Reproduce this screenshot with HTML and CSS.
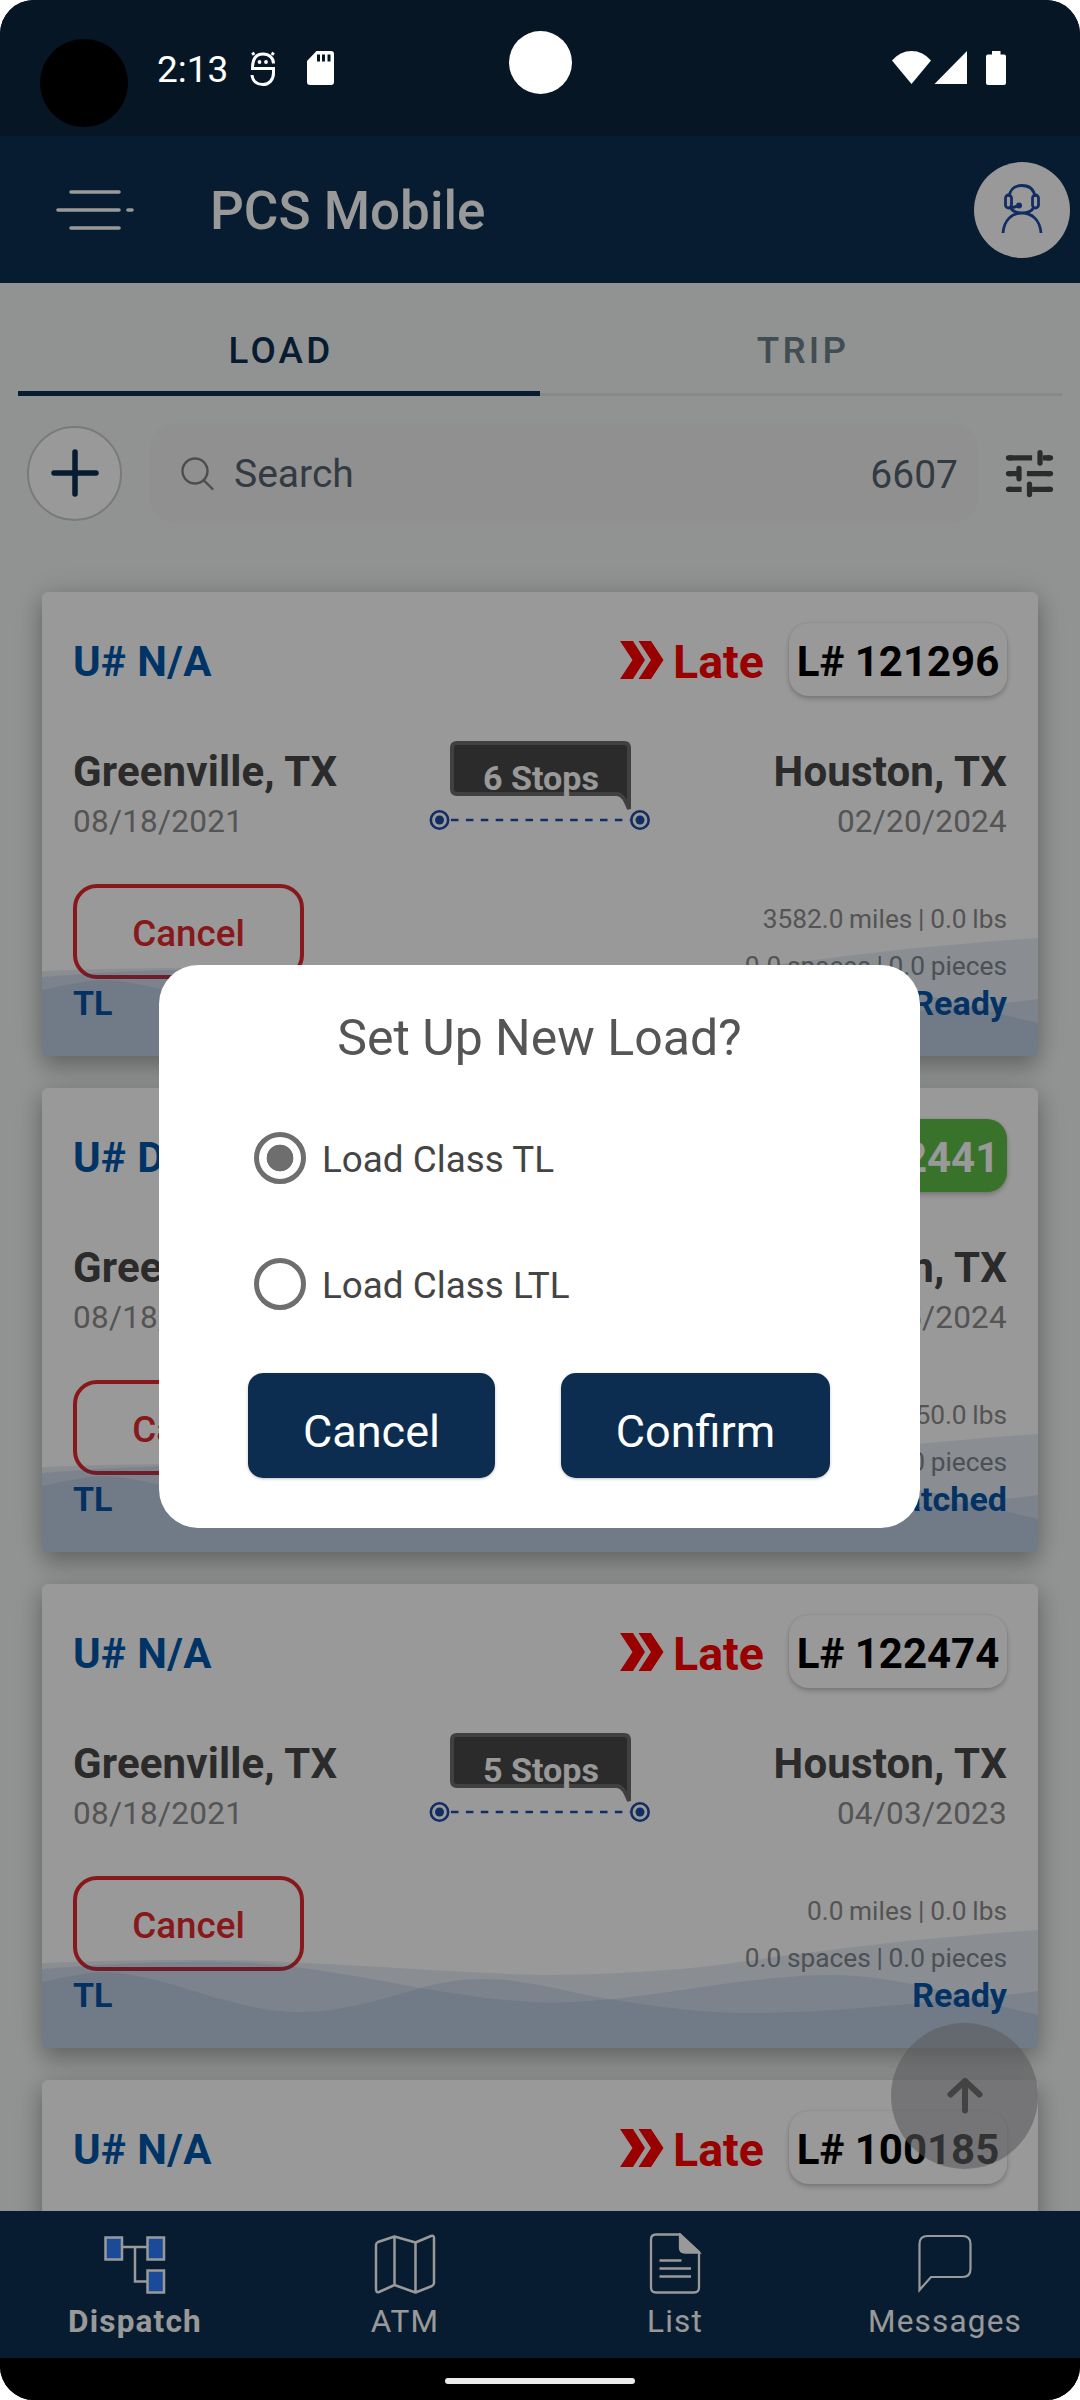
FILE: index.html
```html
<!DOCTYPE html>
<html lang="en">
<head>
  <meta charset="UTF-8">
  <meta name="viewport" content="width=device-width, initial-scale=1.0">
  <title>PCS Mobile</title>
  <link rel="stylesheet" href="styles.css">
</head>
<body>
  <svg class="defs" width="0" height="0">
    <symbol id="waves" viewBox="0 0 996 120" preserveAspectRatio="none">
      <path d="M0 35C50 33 100 32 151 32C250 31 390 44 498 47C560 47 640 43 705 33C790 21 900 8 996 2V120H0Z"/>
      <path d="M0 41C60 36 120 33 182 34C240 34 310 47 378 60C420 67 460 73 498 74.500C525 75 550 73 570 71C620 66 660 58 705 53C740 49 765 47 791 47C860 47 930 72 996 87V120H0Z"/>
      <path d="M0 54C25 49 45 44 65 44C100 46 135 58 165 67C200 77 225 84 258 84C300 84 345 70 378 60C400 54 420 51 440 51C465 51 480 54 498 57C520 61 545 68 570 71.500C615 79 660 85 705 85C750 85 800 82 842 78C895 74 950 69 996 63V120H0Z"/>
    </symbol>
    <symbol id="late" viewBox="0 0 44 38">
      <path d="M0 0H13L25 19L13 38H0L12.500 19Z"/>
      <path d="M18.500 0H31L43.500 19L31 38H18.500L31 19Z"/>
    </symbol>
    <symbol id="route" viewBox="0 0 222 92">
      <path class="bubble" d="M28 2H195Q200 2 200 7V68C197 61 195 54 188 53H28Q23 53 23 48V7Q23 2 28 2Z"/>
      <circle class="ring" cx="10.500" cy="79" r="8.700"/>
      <circle class="dot" cx="10.500" cy="79" r="4.500"/>
      <path class="dash" d="M22 79H201"/>
      <circle class="ring" cx="211" cy="79" r="8.700"/>
      <circle class="dot" cx="211" cy="79" r="4.500"/>
    </symbol>
  </svg>

  <div class="phone">
    <div class="status-bar">
      <div class="touch-dot"></div>
      <span class="clock">2:13</span>
      <svg class="debug-icon" width="26" height="36" viewBox="0 0 26 36">
        <path d="M23.500 12.500C23.500 7 19 3 13 3C7 3 2.500 7 2.500 17.500H23.500V22C23.500 29 19 33.500 13 33.500C7 33.500 2.500 30 2 24M4 4L2.500 1.500M22 4L23.500 1.500" fill="none" stroke="#fff" stroke-width="3"/>
        <circle cx="9.500" cy="11" r="1.900" fill="#fff"/>
        <circle cx="16" cy="11" r="1.900" fill="#fff"/>
      </svg>
      <svg class="sd-icon" width="27" height="34" viewBox="0 0 27 34">
        <path fill="#fff" fill-rule="evenodd" d="M9.500 0H24Q27 0 27 3V31Q27 34 24 34H3Q0 34 0 31V10ZM10 3.500V10.500H13V3.500ZM15 3.500V10.500H18V3.500ZM20.500 3.500V10.500H23.500V3.500Z"/>
      </svg>
      <div class="camera"></div>
      <svg class="system-icons" width="116" height="36" viewBox="0 0 116 36" fill="#fff">
        <path d="M0 9.500Q8 0 19.500 0T39 9.500L19.500 33Z"/>
        <path d="M42.500 33L75 0V33Z"/>
        <path d="M100 0H108.500V3.500H112Q114 3.500 114 5.500V32Q114 34 112 34H96Q94 34 94 32V5.500Q94 3.500 96 3.500H100Z"/>
      </svg>
    </div>

    <div class="app">
      <header class="header">
        <svg class="menu-icon" width="80" height="42" viewBox="0 0 80 42" fill="none" stroke="#fff" stroke-width="3.600" stroke-linecap="round">
          <path d="M15 3H63M2 21H63M72 21H76M15 39H63"/>
        </svg>
        <h1>PCS Mobile</h1>
        <div class="avatar">
          <svg width="46" height="54" viewBox="0 0 46 54" fill="none" stroke="#1e4ba7" stroke-width="2.800">
            <path d="M10 14C11 6 16 2.500 23 2.500S35 6 36 14M11 24C13 28 18 30 23 30S33 28 35 24M4 50C5 37 13 30 23 30S41 37 42 50M10 24Q15 25 18 23"/>
            <rect x="6.500" y="12" width="6" height="13" rx="3"/>
            <rect x="33.500" y="12" width="6" height="13" rx="3"/>
            <circle cx="20" cy="22.500" r="3" fill="#1e4ba7" stroke="none"/>
          </svg>
        </div>
      </header>

      <nav class="tabs">
        <span class="tab active">LOAD</span>
        <span class="tab">TRIP</span>
      </nav>

      <div class="toolbar">
        <button class="add-button">
          <svg width="50" height="50" viewBox="0 0 50 50" stroke="#0c2f50" stroke-width="5.500" stroke-linecap="round">
            <path d="M25 4V46M4 25H46"/>
          </svg>
        </button>
        <div class="search">
          <svg width="34" height="34" viewBox="0 0 34 34" fill="none" stroke="#7c8388" stroke-width="2.400" stroke-linecap="round">
            <circle cx="14" cy="14" r="12.500"/>
            <path d="M23 23.500L31.500 32"/>
          </svg>
          <span class="search-text">Search</span>
          <span class="count">6607</span>
        </div>
        <svg class="filter-icon" width="63" height="63" viewBox="0 0 24 24" fill="none" stroke="#484848" stroke-width="2">
          <path d="M4 6H13M17 6H20M4 12H8M11 12H20M4 18H9M13 18H20"/>
          <path stroke-linecap="round" d="M4 6H5M16 4V8M19 6H20M4 12H5M8 10V14M19 12H20M4 18H5M12 16V20M19 18H20"/>
        </svg>
      </div>

      <main class="loads">
        <article class="card">
          <div class="card-top">
            <span class="unit">U# N/A</span>
            <svg class="late-icon" width="44" height="38"><use href="#late"/></svg>
            <span class="late">Late</span>
            <span class="badge">L# 121296</span>
          </div>
          <div class="card-route">
            <div class="place"><b>Greenville, TX</b><span>08/18/2021</span></div>
            <div class="stops">
              <svg width="222" height="92"><use href="#route"/></svg>
              <span>6 Stops</span>
            </div>
            <div class="place end"><b>Houston, TX</b><span>02/20/2024</span></div>
          </div>
          <div class="card-details">
            <button class="cancel-load">Cancel</button>
            <div class="metrics"><span>3582.0 miles | 0.0 lbs</span><span>0.0 spaces | 0.0 pieces</span></div>
          </div>
          <div class="card-foot"><span>TL</span><span>Ready</span></div>
          <svg class="card-waves"><use href="#waves"/></svg>
        </article>

        <article class="card">
          <div class="card-top">
            <span class="unit">U# D</span>
            <span class="badge green">L# 122441</span>
          </div>
          <div class="card-route">
            <div class="place"><b>Greenville, TX</b><span>08/18/2021</span></div>
            <div class="place end"><b>Houston, TX</b><span>02/15/2024</span></div>
          </div>
          <div class="card-details">
            <button class="cancel-load">Cancel</button>
            <div class="metrics"><span>0.0 miles | 50.0 lbs</span><span>0.0 spaces | 0.0 pieces</span></div>
          </div>
          <div class="card-foot"><span>TL</span><span>Dispatched</span></div>
          <svg class="card-waves"><use href="#waves"/></svg>
        </article>

        <article class="card">
          <div class="card-top">
            <span class="unit">U# N/A</span>
            <svg class="late-icon" width="44" height="38"><use href="#late"/></svg>
            <span class="late">Late</span>
            <span class="badge">L# 122474</span>
          </div>
          <div class="card-route">
            <div class="place"><b>Greenville, TX</b><span>08/18/2021</span></div>
            <div class="stops">
              <svg width="222" height="92"><use href="#route"/></svg>
              <span>5 Stops</span>
            </div>
            <div class="place end"><b>Houston, TX</b><span>04/03/2023</span></div>
          </div>
          <div class="card-details">
            <button class="cancel-load">Cancel</button>
            <div class="metrics"><span>0.0 miles | 0.0 lbs</span><span>0.0 spaces | 0.0 pieces</span></div>
          </div>
          <div class="card-foot"><span>TL</span><span>Ready</span></div>
          <svg class="card-waves"><use href="#waves"/></svg>
        </article>

        <article class="card">
          <div class="card-top">
            <span class="unit">U# N/A</span>
            <svg class="late-icon" width="44" height="38"><use href="#late"/></svg>
            <span class="late">Late</span>
            <span class="badge">L# 100185</span>
          </div>
        </article>

        <button class="scroll-top">
          <svg width="40" height="40" viewBox="0 0 40 40" fill="none" stroke="#717171" stroke-width="6" stroke-linecap="round" stroke-linejoin="round">
            <path d="M20 34.500V5M5.500 18.500L20 5L34.500 18.500"/>
          </svg>
        </button>
      </main>

      <nav class="bottom-nav">
        <div class="nav-item current">
          <svg width="70" height="62" viewBox="0 0 70 62" fill="none" stroke="#fff" stroke-width="2.500">
            <path d="M23 14H47M35 14V48.500H47"/>
            <g fill="#2d7cff">
              <rect x="5.500" y="4.500" width="16.500" height="22"/>
              <rect x="47.500" y="4.500" width="16.500" height="22"/>
              <rect x="47.500" y="37.500" width="16.500" height="22"/>
            </g>
          </svg>
          <span>Dispatch</span>
        </div>
        <div class="nav-item">
          <svg width="70" height="62" viewBox="0 0 70 62" fill="none" stroke="#fff" stroke-width="2.500" stroke-linejoin="round">
            <path d="M24.500 3.500L8 9Q6 10 6 12V56Q6 60 9 59L24.500 52L45.500 59.500L62 53Q64 52 64 50V5Q64 2 61 3L45.500 9.500ZM24.500 3.500V52M45.500 9.500V59.500"/>
          </svg>
          <span>ATM</span>
        </div>
        <div class="nav-item">
          <svg width="70" height="62" viewBox="0 0 70 62" fill="none" stroke="#fff" stroke-width="2.300">
            <path d="M40 1.500H16Q11 1.500 11 6.500V54.500Q11 59.500 16 59.500H54Q59 59.500 59 54.500V19Z"/>
            <path d="M40 1.500V15Q40 19.500 45 19.500H59Z" fill="#fff"/>
            <path d="M19.500 27.500H41.500M19.500 35.500H51M19.500 43.500H51"/>
          </svg>
          <span>List</span>
        </div>
        <div class="nav-item">
          <svg width="70" height="62" viewBox="0 0 70 62" fill="none" stroke="#fff" stroke-width="2.200">
            <path d="M9.500 57V11Q9.500 3 17.500 3H52.500Q60.500 3 60.500 11V36Q60.500 44 52.500 44H21Z"/>
          </svg>
          <span>Messages</span>
        </div>
      </nav>

      <div class="scrim">
        <div class="dialog">
          <h2>Set Up New Load?</h2>
          <label class="option">
            <i class="radio checked"></i>
            <span>Load Class TL</span>
          </label>
          <label class="option">
            <i class="radio"></i>
            <span>Load Class LTL</span>
          </label>
          <div class="dialog-buttons">
            <button class="dialog-cancel">Cancel</button>
            <button class="dialog-confirm">Confirm</button>
          </div>
        </div>
      </div>
    </div>

    <div class="gesture-bar"><div class="home-pill"></div></div>
  </div>
</body>
</html>
```

FILE: styles.css
```css
* {
  box-sizing: border-box;
}

body {
  margin: 0;
  background: #fff;
  font-family: Roboto, sans-serif;
}

h1, h2 {
  margin: 0;
}

button {
  font-family: inherit;
  padding: 0;
  border: none;
}

svg {
  display: block;
  flex: none;
}

.defs {
  position: absolute;
}

.phone {
  width: 1080px;
  height: 2400px;
  display: flex;
  flex-direction: column;
  border-radius: 34px;
  overflow: hidden;
  background: #000;
}

/* Status bar */
.status-bar {
  position: relative;
  height: 136px;
  padding: 51px 72px 0 157px;
  display: flex;
  align-items: flex-start;
  background: #061625;
}

.touch-dot {
  position: absolute;
  left: 40px;
  top: 39px;
  width: 88px;
  height: 88px;
  border-radius: 50%;
  background: #000;
}

.camera {
  position: absolute;
  left: 509px;
  top: 31px;
  width: 63px;
  height: 63px;
  border-radius: 50%;
  background: #fff;
}

.clock {
  width: 93px;
  font-size: 37px;
  line-height: 37px;
  color: #fff;
}

.sd-icon {
  margin-left: 31px;
}

.system-icons {
  margin-left: auto;
}

.app {
  position: relative;
  height: 2222px;
  display: flex;
  flex-direction: column;
  background: #f2f6f4;
}

/* Header */
.header {
  flex: none;
  height: 147px;
  padding: 0 10px 0 56px;
  display: flex;
  align-items: center;
  background: #0c2f50;
}

.header h1 {
  padding-top: 2px;
  margin-left: 74px;
  font-size: 53px;
  line-height: 60px;
  font-weight: 500;
  color: #fff;
}

.avatar {
  width: 96px;
  height: 96px;
  margin-left: auto;
  display: flex;
  align-items: center;
  justify-content: center;
  border-radius: 50%;
  background: #fff;
}

/* Tabs */
.tabs {
  flex: none;
  height: 113px;
  margin: 0 18px;
  display: flex;
}

.tab {
  flex: 1;
  padding: 44px 0 0 4px;
  border-bottom: 3px solid #e2e5e3;
  font-size: 36.75px;
  line-height: 48px;
  font-weight: 500;
  letter-spacing: 3.3px;
  text-align: center;
  color: #6f7f8b;
}

.tab.active {
  border-bottom: 5px solid #0c2f50;
  color: #0c2f50;
}

/* Search row */
.toolbar {
  flex: none;
  height: 100px;
  margin-top: 27px;
  padding: 0 19px 0 27px;
  display: flex;
  align-items: center;
}

.add-button {
  width: 95px;
  height: 95px;
  display: flex;
  align-items: center;
  justify-content: center;
  border: 2px solid #cbcbcb;
  border-radius: 50%;
  background: #fff;
}

.search {
  width: 830px;
  height: 100px;
  margin-left: 27px;
  padding: 2px 21px 0 32px;
  display: flex;
  align-items: center;
  border-radius: 26px;
  background: #f2f0f0;
  font-size: 39px;
  color: #55636f;
}

.search-text {
  margin-left: 19px;
}

.count {
  padding-top: 2px;
  margin-left: auto;
}

.filter-icon {
  margin-left: auto;
}

/* Load cards */
.loads {
  position: relative;
  flex: 1;
  min-height: 0;
  padding: 69px 42px 0;
  overflow: hidden;
}

.card {
  position: relative;
  height: 464px;
  margin-bottom: 32px;
  padding: 31px 31px 0;
  border-radius: 6px;
  background: #fff;
  box-shadow: 0 10px 20px rgba(0, 0, 0, .24), 0 2px 36px rgba(0, 0, 0, .14);
}

.card-top {
  height: 73px;
  display: flex;
  align-items: flex-start;
  font-size: 42px;
  line-height: 77px;
  font-weight: 700;
}

.unit {
  margin-right: auto;
  letter-spacing: .4px;
  color: #0057ab;
}

.late-icon {
  margin: 18px 9px 0 0;
  fill: #ff0000;
}

.late {
  width: 91px;
  margin-right: 25px;
  padding-top: 1px;
  font-size: 46.5px;
  color: #ff0000;
}

.badge {
  width: 218px;
  height: 73px;
  border-radius: 20px;
  text-align: center;
  background: #fff;
  color: #000;
  box-shadow: 0 3px 5px rgba(0, 0, 0, .2), 0 0 3px rgba(0, 0, 0, .1);
}

.badge.green {
  background: #5fbe46;
  color: #fff;
}

.card-route {
  height: 105px;
  margin-top: 45px;
  display: grid;
  grid-template-columns: 356px 222px 356px;
}

.place {
  padding-top: 6px;
  display: flex;
  flex-direction: column;
}

.place b {
  font-size: 42px;
  line-height: 50px;
  letter-spacing: .15px;
  color: #484848;
}

.place span {
  font-size: 31.5px;
  line-height: 49px;
  letter-spacing: .25px;
  color: #8c8c8c;
}

.place.end {
  grid-column: 3;
  text-align: right;
}

.stops {
  position: relative;
}

.stops span {
  position: absolute;
  left: 23px;
  top: 17px;
  width: 178px;
  font-size: 34.1px;
  line-height: 40px;
  font-weight: 700;
  text-align: center;
  color: #fff;
}

.bubble {
  fill: #484848;
  stroke: #6b6b6b;
  stroke-width: 4;
}

.ring {
  fill: none;
  stroke: #1e4ba7;
  stroke-width: 2.6;
}

.dot {
  fill: #1e4ba7;
}

.dash {
  stroke: #1e4ba7;
  stroke-width: 2.4;
  stroke-dasharray: 7.5 7.4;
}

.card-details {
  height: 95px;
  margin-top: 38px;
  display: flex;
  justify-content: space-between;
}

.cancel-load {
  width: 231px;
  height: 95px;
  padding-top: 4px;
  border: 4px solid #e12b2f;
  border-radius: 24px;
  background: none;
  font-size: 36.75px;
  font-weight: 500;
  color: #e12b2f;
}

.metrics {
  padding-top: 12px;
  display: flex;
  flex-direction: column;
  text-align: right;
  font-size: 26.25px;
  line-height: 46.5px;
  word-spacing: -.8px;
  color: #8c8c8c;
}

.card-foot {
  display: flex;
  justify-content: space-between;
  font-size: 34.1px;
  line-height: 48px;
  font-weight: 700;
  color: #0057ab;
}

.card-waves {
  position: absolute;
  left: 0;
  bottom: 0;
  width: 996px;
  height: 120px;
  border-radius: 0 0 6px 6px;
  fill: rgba(25, 80, 150, .105);
}

.scroll-top {
  position: absolute;
  left: 891px;
  top: 1500px;
  width: 147px;
  height: 146px;
  display: flex;
  align-items: center;
  justify-content: center;
  border-radius: 50%;
  background: rgba(149, 149, 153, .56);
}

/* Bottom navigation */
.bottom-nav {
  position: relative;
  flex: none;
  height: 147px;
  padding-top: 22px;
  display: flex;
  background: #0c2f50;
}

.nav-item {
  flex: 1;
  display: flex;
  flex-direction: column;
  align-items: center;
  font-size: 31.5px;
  line-height: 54px;
  letter-spacing: 1.2px;
  color: #fff;
}

.nav-item.current {
  font-weight: 700;
}

/* Dialog */
.scrim {
  position: absolute;
  inset: 0;
  background: rgba(0, 0, 0, .4);
}

.dialog {
  width: 761px;
  height: 563px;
  margin: 829px 0 0 159px;
  padding: 40px 89px 0;
  border-radius: 39px;
  background: #fff;
}

.dialog h2 {
  margin-bottom: 56px;
  font-size: 50px;
  line-height: 66px;
  font-weight: 400;
  text-align: center;
  color: #555;
}

.option {
  height: 62px;
  margin-bottom: 64px;
  padding-left: 6px;
  display: flex;
  align-items: center;
  font-size: 36.85px;
  color: #444;
}

.option span {
  padding-top: 2px;
}

.radio {
  width: 52px;
  height: 52px;
  margin-right: 16px;
  border: 5.5px solid #6e6e6e;
  border-radius: 50%;
}

.radio.checked {
  background: radial-gradient(circle, #6e6e6e 13px, transparent 13.7px);
}

.dialog-buttons {
  margin-top: -6px;
  display: flex;
  justify-content: space-between;
}

.dialog-buttons button {
  height: 105px;
  padding-top: 11px;
  border-radius: 15px;
  background: #0c2d4f;
  font-size: 45px;
  color: #fff;
  box-shadow: 0 1px 3px rgba(0, 0, 0, .25);
}

.dialog-cancel {
  width: 247px;
}

.dialog-confirm {
  width: 269px;
  margin-right: 1px;
}

/* System gesture bar */
.gesture-bar {
  height: 42px;
  padding-top: 20px;
  background: #000;
}

.home-pill {
  width: 190px;
  height: 6px;
  margin: 0 auto;
  border-radius: 3px;
  background: #ececec;
}
```
